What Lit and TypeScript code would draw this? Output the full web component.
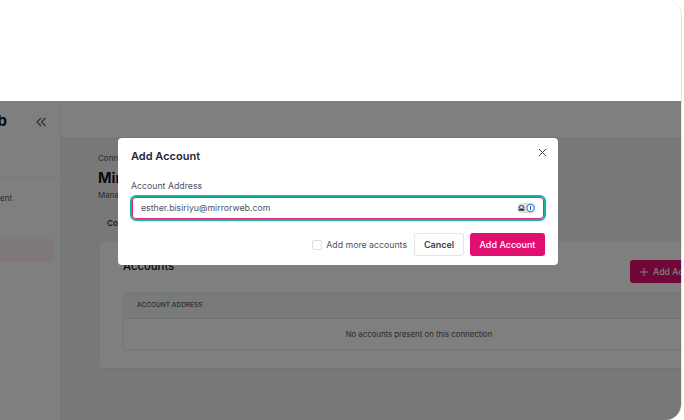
import { LitElement, html, css } from "lit";
import { customElement } from "lit/decorators.js";

@customElement("app-root")
export class AppRoot extends LitElement {
  static styles = css`
    :host { display: block; width: 684px; height: 420px; background: #fff; font-family: Inter, "Liberation Sans", sans-serif; color: #1f2937; }
    * { box-sizing: border-box; }
    .frame { position: relative; width: 682px; height: 420px; border-right: 1px solid #e4e4e4; border-radius: 0 16px 16px 0; overflow: hidden; background: #fff; display: flex; flex-direction: column; }
    .blank { height: 101px; flex: none; }
    .app { position: relative; flex: 1; display: flex; min-height: 0; overflow: hidden; background: #f1f1f1; }
    .side { width: 61px; flex: none; background: #fff; border-right: 1px solid #f0f0f0; display: flex; flex-direction: column; }
    .side-top { height: 77px; flex: none; display: flex; justify-content: flex-end; padding: 10px 13px 0 0; border-bottom: 1px solid #eee; position: relative; }
    .logo { position: absolute; right: 53px; top: 10px; font-size: 15px; font-weight: 700; color: #111827; line-height: 20px; }
    .chev { margin-top: 6px; width: 11px; height: 10px; color: #555; }
    .nav-text { font-size: 8px; color: #4b5563; margin-top: 14px; height: 12px; line-height: 12px; overflow: hidden; white-space: nowrap; }
    .nav-active { width: 53px; height: 23px; margin-top: 35px; flex: none; background: #fdf0f6; border-radius: 0 2px 2px 0; }
    .main { flex: 1; min-width: 0; display: flex; flex-direction: column; }
    .topbar { height: 37px; flex: none; background: #fff; border-bottom: 1px solid #ececec; }
    .content { flex: 1; padding: 14px 0 0 37px; overflow: hidden; }
    .crumb { font-size: 8px; line-height: 12px; color: #4b5563; white-space: nowrap; }
    .h1 { font-size: 14.5px; line-height: 20px; font-weight: 700; color: #111827; margin-top: 4px; white-space: nowrap; }
    .sub { font-size: 8px; line-height: 12px; color: #4b5563; margin-top: 1px; white-space: nowrap; }
    .tab { font-size: 8px; line-height: 12px; font-weight: 600; color: #374151; margin: 16px 0 0 9px; white-space: nowrap; }
    .card { width: 640px; height: 126px; margin: 13px 0 0 2px; background: #fff; border-radius: 4px; box-shadow: 0 1px 2px rgba(0,0,0,.06); padding: 14px 10px 0 23px; }
    .card-head { display: flex; align-items: flex-start; height: 36px; }
    .card-title { font-size: 11.3px; line-height: 20px; color: #111827; font-weight: 500; }
    .add-bg { margin: 4px 0 0 auto; width: 100px; height: 23px; flex: none; display: flex; align-items: center; gap: 5px; padding-left: 10px; background: #e20f73; border-radius: 3px; color: #fff; font-size: 8.75px; font-weight: 500; white-space: nowrap; }
    .add-bg svg { width: 8px; height: 8px; flex: none; }
    .table { width: 592px; height: 58px; border: 1px solid #e8eaeb; border-radius: 3px; background: #fff; box-shadow: 0 1px 2px rgba(0,0,0,.05); }
    .thead { height: 26px; background: #f3f5f5; border-bottom: 1px solid #e5e7e8; font-size: 6.4px; font-weight: 500; line-height: 25px; padding-left: 13px; color: #4b5563; letter-spacing: .1px; }
    .tbody { height: 30px; font-size: 7.8px; line-height: 30px; text-align: center; color: #4b5563; }
    .overlay { position: absolute; inset: 0; background: rgba(0,0,0,.5); }
    .modal { position: absolute; left: 118px; top: 37px; width: 440px; height: 127px; background: #fff; border-radius: 4px; padding: 10px 13px 0 12px; }
    .modal-title { font-size: 11px; line-height: 16px; font-weight: 600; color: #1f2937; padding-left: 1px; }
    .close { position: absolute; right: 11px; top: 10px; width: 9px; height: 9px; color: #374151; display: block; }
    .label { display: block; font-size: 8.75px; line-height: 12px; color: #4b5563; margin: 16px 0 0 1px; }
    .input { height: 26px; width: 416px; margin-top: 3px; border: 2px solid #14b89f; border-radius: 6px; background: #fff; box-shadow: inset 0 0 0 1px #e0247f; display: flex; align-items: center; padding: 0 9px 0 9px; font-size: 8.75px; color: #4b5563; }
    .val { flex: 1; white-space: nowrap; }
    .pw { display: flex; align-items: center; height: 10px; width: 18px; border-radius: 5px; background: #dcdee0; }
    .pw svg { display: block; }
    .foot { display: flex; align-items: center; justify-content: flex-end; margin-top: 12px; width: 415px; }
    .check { width: 10px; height: 10px; border: 1px solid #dcdfe3; border-radius: 2px; background: #fff; margin-right: 4px; }
    .check-text { font-size: 8.75px; color: #4b5563; margin-right: 7px; white-space: nowrap; }
    .btn { height: 23px; border-radius: 3px; font-size: 9px; font-weight: 600; display: flex; align-items: center; justify-content: center; white-space: nowrap; }
    .cancel { width: 50px; background: #fff; border: 1px solid #e3e5e8; color: #374151; margin-right: 6px; }
    .primary { width: 75px; background: #e20f73; color: #fff; font-weight: 500; }
  `;

  render() {
    return html`
      <div class="frame">
        <div class="blank"></div>
        <div class="app">
          <aside class="side">
            <div class="side-top">
              <span class="logo">b</span>
              <svg class="chev" viewBox="0 0 11 10" fill="none" stroke="currentColor" stroke-width="1.1"><path d="M5 1 1 5l4 4M9.5 1l-4 4 4 4"/></svg>
            </div>
            <div class="nav-text">ent</div>
            <div class="nav-active"></div>
          </aside>
          <div class="main">
            <div class="topbar"></div>
            <div class="content">
              <div class="crumb">Connections</div>
              <div class="h1">MirrorWeb</div>
              <div class="sub">Manage accounts</div>
              <div class="tab">Connection</div>
              <div class="card">
                <div class="card-head">
                  <div class="card-title">Accounts</div>
                  <div class="add-bg"><svg viewBox="0 0 8 8" stroke="currentColor" fill="none"><path d="M4 0v8M0 4h8"/></svg>Add Account</div>
                </div>
                <div class="table">
                  <div class="thead">ACCOUNT ADDRESS</div>
                  <div class="tbody">No accounts present on this connection</div>
                </div>
              </div>
            </div>
          </div>
          <div class="overlay"></div>
          <div class="modal">
            <div class="modal-title">Add Account</div>
            <svg class="close" viewBox="0 0 9 9" fill="none" stroke="currentColor" stroke-width="1"><path d="M1 1l7 7M8 1 1 8"/></svg>
            <label class="label">Account Address</label>
            <div class="input">
              <span class="val">esther.bisiriyu@mirrorweb.com</span>
              <span class="pw">
                <svg width="9" height="10" viewBox="0 0 9 10" fill="none"><path d="M2 5a2.5 2.5 0 0 1 5 0" stroke="#333" stroke-width="1"/><rect x="1.6" y="5.4" width="5.8" height="2.4" rx=".8" fill="#333"/></svg>
                <svg width="9" height="10" viewBox="0 0 9 10" fill="none"><circle cx="4.5" cy="5" r="4.2" fill="#3b8fee"/><circle cx="4.5" cy="5" r="2.9" fill="#fff"/><rect x="4" y="3" width="1" height="4" fill="#1a5fb4"/></svg>
              </span>
            </div>
            <div class="foot">
              <span class="check"></span>
              <span class="check-text">Add more accounts</span>
              <div class="btn cancel">Cancel</div>
              <div class="btn primary">Add Account</div>
            </div>
          </div>
        </div>
      </div>
    `;
  }
}
